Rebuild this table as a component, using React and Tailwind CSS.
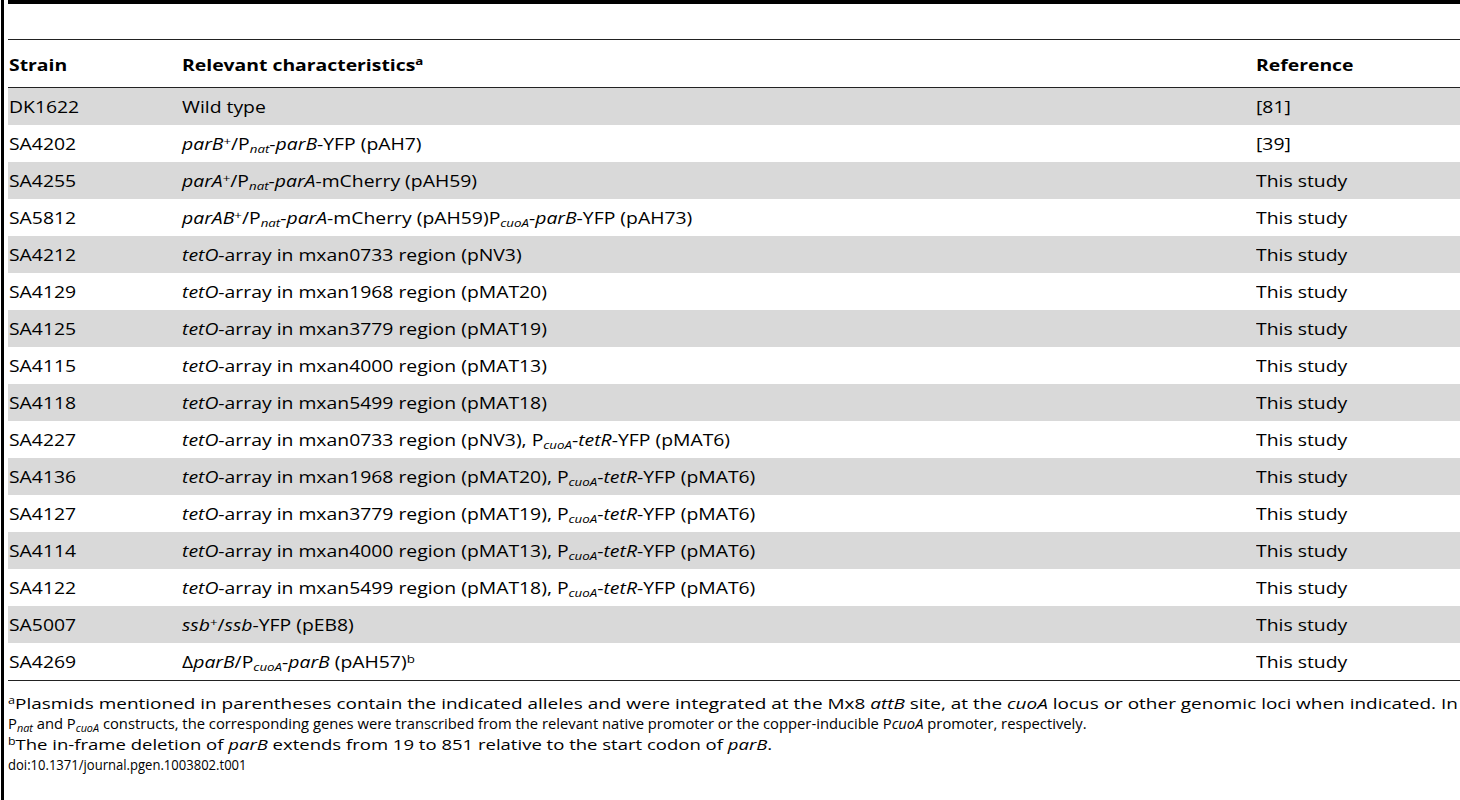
const I = ({ children }) => <i>{children}</i>;
const Sub = ({ children }) => <sub className="text-[11px] italic">{children}</sub>;
const Sup = ({ children }) => <sup className="text-[11px]">{children}</sup>;

// the reference print is slightly wider than Open Sans at this size
const Wide = ({ children }) => (
  <span className="inline-block origin-left scale-x-[1.21] whitespace-nowrap">{children}</span>
);

const tetR = (
  <>
    P<Sub>cuoA</Sub>-<I>tetR</I>-YFP (pMAT6)
  </>
);

const rows = [
  ["DK1622", <>Wild type</>, "[81]"],
  [
    "SA4202",
    <>
      <I>parB</I>
      <Sup>+</Sup>/P<Sub>nat</Sub>-<I>parB</I>-YFP (pAH7)
    </>,
    "[39]",
  ],
  [
    "SA4255",
    <>
      <I>parA</I>
      <Sup>+</Sup>/P<Sub>nat</Sub>-<I>parA</I>-mCherry (pAH59)
    </>,
    "This study",
  ],
  [
    "SA5812",
    <>
      <I>parAB</I>
      <Sup>+</Sup>/P<Sub>nat</Sub>-<I>parA</I>-mCherry (pAH59)P<Sub>cuoA</Sub>-<I>parB</I>-YFP (pAH73)
    </>,
    "This study",
  ],
  ["SA4212", <><I>tetO</I>-array in mxan0733 region (pNV3)</>, "This study"],
  ["SA4129", <><I>tetO</I>-array in mxan1968 region (pMAT20)</>, "This study"],
  ["SA4125", <><I>tetO</I>-array in mxan3779 region (pMAT19)</>, "This study"],
  ["SA4115", <><I>tetO</I>-array in mxan4000 region (pMAT13)</>, "This study"],
  ["SA4118", <><I>tetO</I>-array in mxan5499 region (pMAT18)</>, "This study"],
  ["SA4227", <><I>tetO</I>-array in mxan0733 region (pNV3), {tetR}</>, "This study"],
  ["SA4136", <><I>tetO</I>-array in mxan1968 region (pMAT20), {tetR}</>, "This study"],
  ["SA4127", <><I>tetO</I>-array in mxan3779 region (pMAT19), {tetR}</>, "This study"],
  ["SA4114", <><I>tetO</I>-array in mxan4000 region (pMAT13), {tetR}</>, "This study"],
  ["SA4122", <><I>tetO</I>-array in mxan5499 region (pMAT18), {tetR}</>, "This study"],
  [
    "SA5007",
    <>
      <I>ssb</I>
      <Sup>+</Sup>/<I>ssb</I>-YFP (pEB8)
    </>,
    "This study",
  ],
  [
    "SA4269",
    <>
      Δ<I>parB</I>/P<Sub>cuoA</Sub>-<I>parB</I> (pAH57)<Sup>b</Sup>
    </>,
    "This study",
  ],
];

export default function App() {
  return (
    <div className="flex h-[800px] w-[1460px] overflow-hidden bg-white font-['Open_Sans',sans-serif] text-black">
      <div className="ml-px w-[3px] shrink-0 bg-black" />
      <div className="ml-[4px] flex-1">
        <div className="h-[4px] bg-black" />
        <div className="mt-[35px] border-t-[1.5px] border-[#222]" />

        <div className="grid h-[48px] grid-cols-[174px_1074px_1fr] items-center border-b-[1.5px] border-[#222] pt-[2px] text-[16px] font-bold">
          <div className="pl-px">
            <Wide>Strain</Wide>
          </div>
          <div>
            <Wide>
              Relevant characteristics<sup className="text-[11px]">a</sup>
            </Wide>
          </div>
          <div>
            <Wide>Reference</Wide>
          </div>
        </div>

        <div>
          {rows.map(([strain, desc, ref], i) => (
            <div
              key={strain}
              className={
                "grid h-[37px] grid-cols-[174px_1074px_1fr] items-center pt-px text-[16px] " +
                (i % 2 === 0 ? "bg-[#d9d9d9]" : "bg-white")
              }
            >
              <div className="pl-px">
                <Wide>{strain}</Wide>
              </div>
              <div>
                <Wide>{desc}</Wide>
              </div>
              <div>
                <Wide>{ref}</Wide>
              </div>
            </div>
          ))}
        </div>

        <div className="border-t-[1.5px] border-[#222]" />

        <div className="mt-[12px] whitespace-nowrap text-[15px] leading-[20px]">
          <div className="origin-left scale-x-[1.264]">
            <sup className="text-[10px]">a</sup>Plasmids mentioned in parentheses contain the indicated alleles and were
            integrated at the Mx8 <I>attB</I> site, at the <I>cuoA</I> locus or other genomic loci when indicated. In
          </div>
          <div className="h-[21px] origin-left scale-x-[0.985]">
            P<Sub>nat</Sub> and P<Sub>cuoA</Sub> constructs, the corresponding genes were transcribed from the relevant
            native promoter or the copper-inducible P<I>cuoA</I> promoter, respectively.
          </div>
          <div className="origin-left scale-x-[1.234]">
            <sup className="text-[10px]">b</sup>The in-frame deletion of <I>parB</I> extends from 19 to 851 relative to the
            start codon of <I>parB</I>.
          </div>
          <div className="origin-left scale-x-[0.87]">doi:10.1371/journal.pgen.1003802.t001</div>
        </div>
      </div>
    </div>
  );
}
